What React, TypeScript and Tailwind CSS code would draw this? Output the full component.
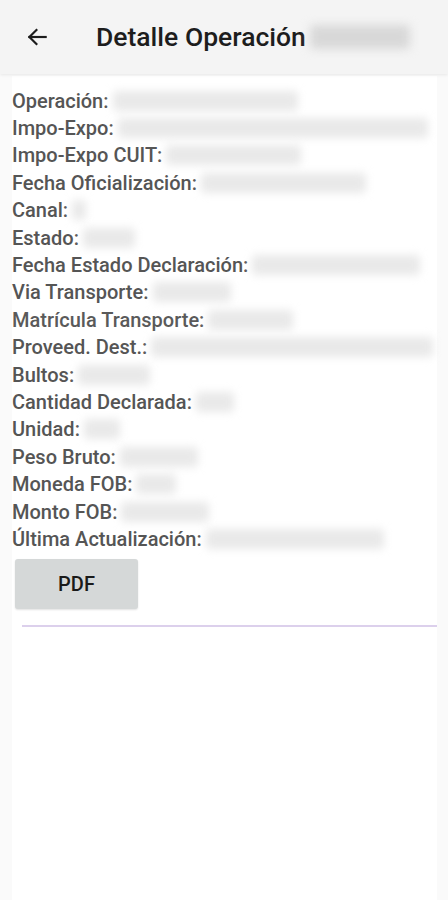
const rows: { label: string; w: number; light?: boolean }[] = [
  { label: "Operación:", w: 185 },
  { label: "Impo-Expo:", w: 310 },
  { label: "Impo-Expo CUIT:", w: 135 },
  { label: "Fecha Oficialización:", w: 165 },
  { label: "Canal:", w: 14 },
  { label: "Estado:", w: 52 },
  { label: "Fecha Estado Declaración:", w: 168 },
  { label: "Via Transporte:", w: 78 },
  { label: "Matrícula Transporte:", w: 85, light: true },
  { label: "Proveed. Dest.:", w: 282 },
  { label: "Bultos:", w: 72 },
  { label: "Cantidad Declarada:", w: 38 },
  { label: "Unidad:", w: 36 },
  { label: "Peso Bruto:", w: 78 },
  { label: "Moneda FOB:", w: 40 },
  { label: "Monto FOB:", w: 88 },
  { label: "Última Actualización:", w: 178 },
];

export default function App() {
  return (
    <div
      className="min-h-[900px] bg-[#fafafa] flex flex-col"
      style={{ fontFamily: "Roboto, 'Noto Sans', sans-serif" }}
    >
      <header className="h-[74px] bg-[#f4f4f4] flex items-center shadow-[0_1px_3px_rgba(0,0,0,0.08)] relative z-10">
        <button className="w-[76px] h-full flex items-center justify-center">
          <svg
            width="26"
            height="26"
            viewBox="0 0 24 24"
            fill="none"
            stroke="#1c1c1c"
            strokeWidth="2"
            strokeLinecap="square"
            className="-ml-[2px]"
          >
            <path d="M20 12H5" />
            <path d="M11.5 5.5L5 12l6.5 6.5" />
          </svg>
        </button>
        <h1 className="text-[26.5px] text-[#1d1d1d] font-medium ml-[20px] flex items-center whitespace-nowrap">
          Detalle Operación
          <span className="ml-[4px] inline-block w-[100px] h-[24px] bg-[#d8d8d8] rounded blur-[5px]" />
        </h1>
      </header>
      <main className="flex-1 flex">
        <div className="ml-[12px] mr-[11px] mt-[2px] flex-1 bg-white pt-[11px] px-0">
          <div className="flex flex-col">
            {rows.map((r) => (
              <div key={r.label} className="h-[27.4px] flex items-center">
                <span
                  className={
                    "text-[20px] leading-none font-medium whitespace-nowrap " +
                    (r.light ? "text-[#5a5a5a]" : "text-[#555555]")
                  }
                >
                  {r.label}
                </span>
                <span
                  className="ml-[4px] h-[20px] bg-[#e9e9e9] rounded-sm blur-[4px]"
                  style={{ width: r.w }}
                />
              </div>
            ))}
          </div>
          <button className="mt-[6px] ml-[3px] w-[123px] h-[50px] bg-[#d5d8d8] rounded-[3px] text-[20px] font-medium text-[#1a1a1a] shadow-[0_1px_2px_rgba(0,0,0,0.12)]">
            PDF
          </button>
          <div className="mt-[16px] ml-[10px] h-[2px] bg-[#dcd0ec]" />
        </div>
      </main>
    </div>
  );
}
